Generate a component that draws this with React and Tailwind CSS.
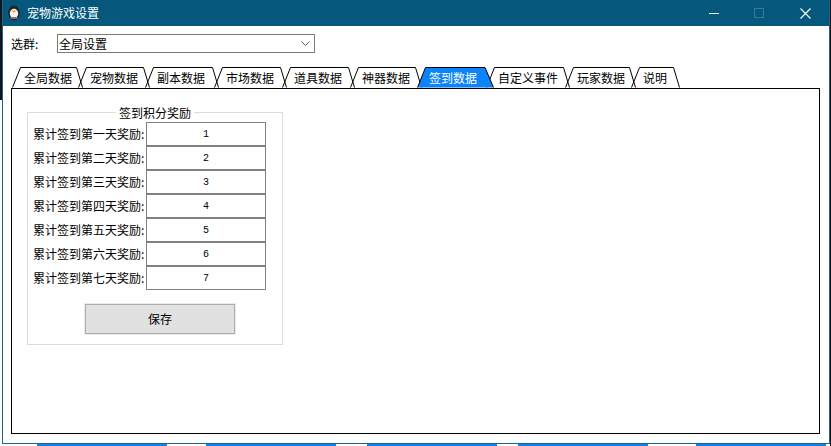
const TABS = [
  { label: "全局数据", w: "w-[66px]", width: 66 },
  { label: "宠物数据", w: "w-[67px]", width: 67 },
  { label: "副本数据", w: "w-[69px]", width: 69 },
  { label: "市场数据", w: "w-[68px]", width: 68 },
  { label: "道具数据", w: "w-[68px]", width: 68 },
  { label: "神器数据", w: "w-[67px]", width: 67 },
  { label: "签到数据", w: "w-[69px]", width: 69, active: true },
  { label: "自定义事件", w: "w-[79px]", width: 79 },
  { label: "玩家数据", w: "w-[66px]", width: 66 },
  { label: "说明", w: "w-[44px]", width: 44 },
];

const REWARDS = ["第一天", "第二天", "第三天", "第四天", "第五天", "第六天", "第七天"];

// the taskbar peeking out below the window
const STRIP = [
  "ml-[37px] w-[130px] bg-[#0a84f0]",
  "ml-[39px] w-[130px] bg-[#0a84f0]",
  "ml-[31px] w-[130px] bg-[#0a84f0]",
  "ml-[21px] w-[130px] bg-[#0a84f0]",
  "ml-[48px] w-[130px] bg-[#0a84f0]",
];

function Tab({ label, w, width, active }) {
  const right = width + (active ? 8 : 5);
  const slant = active ? 9 : 6.5;
  return (
    <div className={`relative h-[21px] ${w} ${active ? "z-10 text-white" : "text-black"}`}>
      <svg className="absolute left-0 top-0 overflow-visible" width={right} height="21">
        <path
          d={`M0.5 20.5 L8.5 0.5 L${right - slant} 0.5 L${right - 0.5} 20.5`}
          fill={active ? "#0a84f8" : "none"}
          stroke="#000"
          strokeWidth="1"
        />
      </svg>
      <span className="absolute left-3 top-[2px] whitespace-nowrap leading-[18px]">{label}</span>
    </div>
  );
}

function Penguin() {
  return (
    <svg width="12" height="16" viewBox="0 0 12 16">
      <ellipse cx="6" cy="8" rx="5.8" ry="7.6" fill="#23232b" />
      <ellipse cx="6" cy="8.6" rx="4.2" ry="4.8" fill="#f5f3f0" />
      <path d="M3.5 5.5 L8.5 5.5 L6 8 Z" fill="#f0a23c" />
      <rect x="2.5" y="12" width="7" height="2" fill="#77777c" />
    </svg>
  );
}

export default function App() {
  return (
    <div
      className="flex h-[446px] w-[831px] overflow-hidden bg-white text-[12px] text-black"
      style={{ fontFamily: '"Noto Sans CJK SC", "Liberation Sans", sans-serif' }}
    >
      <div className="h-[100px] w-[2px] bg-[#14141c]" />

      <div className="flex w-[828px] flex-col">
        <div className="flex h-[444px] flex-col border border-t-0 border-[#1d6488] bg-white">
          {/* Title bar */}
          <div className="flex h-[26px] shrink-0 items-center bg-[#05587c] text-white">
            <div className="ml-[5px]">
              <Penguin />
            </div>
            <span className="ml-[7px]">宠物游戏设置</span>
            <div className="ml-auto mr-[18px] flex items-center">
              <div className="h-px w-[10px] bg-white" />
              <div className="ml-[35px] h-[10px] w-[10px] border border-[#39789a]" />
              <svg className="ml-[36px]" width="11" height="11" viewBox="0 0 11 11">
                <path d="M0.5 0.5 L10.5 10.5 M10.5 0.5 L0.5 10.5" stroke="#fff" strokeWidth="1.1" />
              </svg>
            </div>
          </div>

          {/* Group selector */}
          <div className="mt-[8px] flex h-[19px] items-center pl-[8px]">
            <span className="w-[46px]">选群:</span>
            <div className="flex h-[19px] w-[258px] items-center justify-between border border-[#7a7a7a] pl-px pr-[4px]">
              <span>全局设置</span>
              <svg width="9" height="5" viewBox="0 0 9 5">
                <path d="M0.5 0.5 L4.5 4.5 L8.5 0.5" fill="none" stroke="#606060" strokeWidth="1" />
              </svg>
            </div>
          </div>

          {/* Tabs */}
          <div className="mt-[14px] flex pl-[9px]">
            {TABS.map((tab) => (
              <Tab key={tab.label} {...tab} />
            ))}
          </div>

          {/* Tab page */}
          <div className="ml-[8px] h-[346px] w-[809px] border border-black px-[15px] pt-[23px]">
            <div className="relative h-[233px] w-[256px] border border-[#dcdcdc] pl-[5px] pt-[9px]">
              <span className="absolute left-[88px] top-[-9px] bg-white px-[3px] leading-[18px]">签到积分奖励</span>
              {REWARDS.map((day, i) => (
                <div key={day} className="flex h-[24px] items-center">
                  <span className="w-[113px] whitespace-nowrap">累计签到{day}奖励:</span>
                  <div
                    className="flex h-[24px] w-[120px] items-center justify-center border border-[#808080] pt-px text-[10px]"
                    style={{ fontFamily: '"Liberation Mono", monospace' }}
                  >
                    {i + 1}
                  </div>
                </div>
              ))}
              <div className="ml-[52px] mt-[14px] flex h-[30px] w-[150px] items-center justify-center border border-[#adadad] bg-[#e1e1e1] outline outline-1 outline-[#ebebeb]">
                保存
              </div>
            </div>
          </div>
        </div>

        <div className="-ml-[2px] flex h-[2px]">
          {STRIP.map((cls) => (
            <div key={cls} className={cls} />
          ))}
        </div>
      </div>

      <div className="w-px bg-[#14141c]" />
    </div>
  );
}
